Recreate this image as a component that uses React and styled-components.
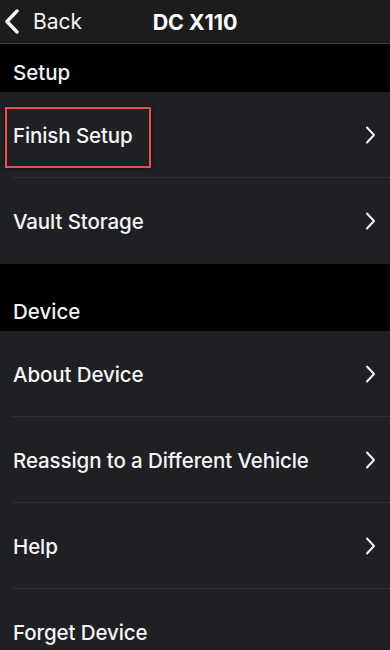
import { createGlobalStyle, styled } from "styled-components"

const GlobalStyle = createGlobalStyle`
    html, body {
        margin: 0;
        padding: 0;
        background: #1f2023;
    }
    body {
        font-family: Inter, "Liberation Sans", sans-serif;
        color: #ffffff;
        -webkit-font-smoothing: antialiased;
    }
`

const Screen = styled.div`
    width: 390px;
    min-height: 650px;
    background: #1f2023;
    overflow: hidden;
`

const Header = styled.div`
    position: relative;
    height: 43px;
    display: flex;
    align-items: center;
    justify-content: center;
    background: #1c1c1d;
    border-bottom: 1px solid #3d3d3f;
`

const BackButton = styled.div`
    position: absolute;
    left: 5px;
    top: 0;
    height: 100%;
    display: flex;
    align-items: center;
    gap: 13px;
    font-size: 21px;
    font-weight: 400;
    color: #f4f4f4;
`

const Title = styled.h1`
    margin: 0;
    font-size: 21.5px;
    font-weight: 700;
    letter-spacing: -0.1px;
`

const SectionTitle = styled.div`
    background: #000;
    height: ${(props) => props.height}px;
    display: flex;
    align-items: flex-end;
    box-sizing: border-box;
    padding: 0 13px 7px;
    font-size: 20.5px;
    font-weight: 500;
    color: #f2f2f2;
`

const Row = styled.div`
    position: relative;
    height: 86px;
    display: flex;
    align-items: center;
    justify-content: space-between;
    padding: 0 14px 0 13px;
    box-sizing: border-box;
    background: #1f2023;
    &::after {
        content: '';
        display: ${(props) => (props.last ? "none" : "block")};
        position: absolute;
        left: 12px;
        right: 0;
        bottom: 0;
        height: 1px;
        background: #2d2e31;
    }
`

const Label = styled.span`
    font-size: 20.5px;
    font-weight: 500;
    color: #f5f5f5;
    letter-spacing: -0.1px;
`

const Highlight = styled.div`
    position: absolute;
    left: 5px;
    top: 15px;
    width: 146px;
    height: 61px;
    box-sizing: border-box;
    border: 2px solid #ec4d50;
    box-shadow: 0 0 4px rgba(0, 0, 0, 0.6);
`

function Chevron() {
    return (
        <svg width="11" height="18" viewBox="0 0 11 18">
            <path d="M2 1.5 L9 9 L2 16.5" fill="none" stroke="#f2f2f2" strokeWidth="2" strokeLinecap="round" strokeLinejoin="round" />
        </svg>
    )
}

function BackChevron() {
    return (
        <svg width="15" height="25" viewBox="0 0 15 25">
            <path d="M12 2 L2 12.5 L12 23" fill="none" stroke="#f4f4f4" strokeWidth="3.4" strokeLinecap="round" strokeLinejoin="round" />
        </svg>
    )
}

function MenuRow({ label, arrow = true, last, highlight }) {
    return (
        <Row last={last}>
            {highlight && <Highlight />}
            <Label>{label}</Label>
            {arrow && <Chevron />}
        </Row>
    )
}

export default function App() {
    return (
        <Screen>
            <GlobalStyle />
            <Header>
                <BackButton>
                    <BackChevron />
                    <span>Back</span>
                </BackButton>
                <Title>DC X110</Title>
            </Header>
            <SectionTitle height={48}>Setup</SectionTitle>
            <MenuRow label="Finish Setup" highlight />
            <MenuRow label="Vault Storage" last />
            <SectionTitle height={67}>Device</SectionTitle>
            <MenuRow label="About Device" />
            <MenuRow label="Reassign to a Different Vehicle" />
            <MenuRow label="Help" />
            <MenuRow label="Forget Device" arrow={false} last />
        </Screen>
    )
}
